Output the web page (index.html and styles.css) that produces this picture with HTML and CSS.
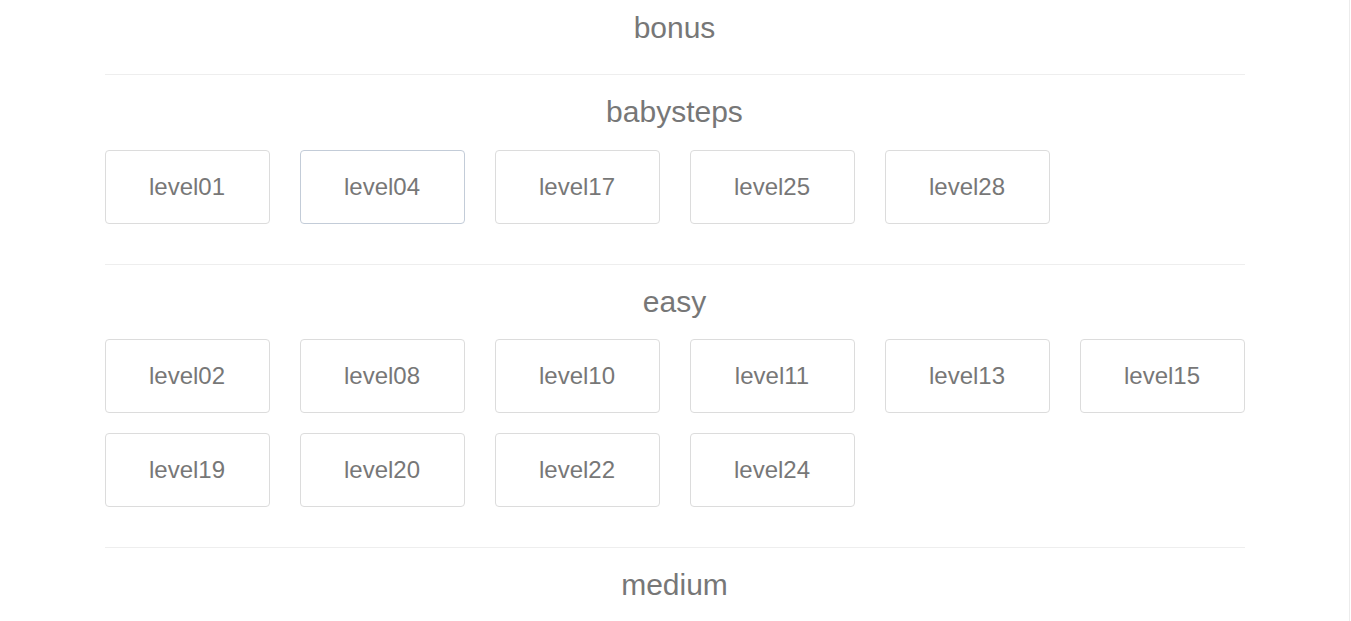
FILE: index.html
```html
<!DOCTYPE html>
<html>
<head>
<meta charset="utf-8">
<link rel="stylesheet" href="styles.css">
</head>
<body>
<div class="page">
  <div class="container">
    <section class="group group-first">
      <h2 class="group-title">bonus</h2>
    </section>
    <section class="group">
      <h2 class="group-title">babysteps</h2>
      <div class="levels levels-loose">
        <a class="level">level01</a>
        <a class="level level-hover">level04</a>
        <a class="level">level17</a>
        <a class="level">level25</a>
        <a class="level">level28</a>
      </div>
    </section>
    <section class="group">
      <h2 class="group-title">easy</h2>
      <div class="levels">
        <a class="level">level02</a>
        <a class="level">level08</a>
        <a class="level">level10</a>
        <a class="level">level11</a>
        <a class="level">level13</a>
        <a class="level">level15</a>
        <a class="level">level19</a>
        <a class="level">level20</a>
        <a class="level">level22</a>
        <a class="level">level24</a>
      </div>
    </section>
    <section class="group group-last">
      <h2 class="group-title">medium</h2>
    </section>
  </div>
</div>
</body>
</html>
```

FILE: styles.css
```css
html, body {
  margin: 0;
  padding: 0;
  background: #fff;
  overflow: hidden;
}
body {
  font-family: "Liberation Sans", Arial, sans-serif;
  color: #777;
}
.page {
  width: 1349px;
  height: 621px;
  border-right: 1px solid #ececec;
}
.container {
  width: 1140px;
  margin: 0 auto;
}
.group {
  padding: 20px 0 40px;
  border-bottom: 1px solid #eee;
}
.group-first {
  padding: 11px 0 30px;
}
.group-last {
  border-bottom: none;
}
.group-title {
  margin: 0;
  font-size: 30px;
  font-weight: normal;
  line-height: 33px;
  text-align: center;
  color: #777;
}
.levels {
  margin-top: 21px;
  display: grid;
  grid-template-columns: repeat(6, 165px);
  column-gap: 30px;
  row-gap: 20px;
}
.levels-loose {
  margin-top: 22px;
}
.level {
  box-sizing: border-box;
  height: 74px;
  display: flex;
  align-items: center;
  justify-content: center;
  border: 1px solid #dcdcdc;
  border-radius: 4px;
  font-size: 24px;
  color: #777;
  cursor: pointer;
}
.level-hover {
  border-color: #c3ccd8;
}
```
